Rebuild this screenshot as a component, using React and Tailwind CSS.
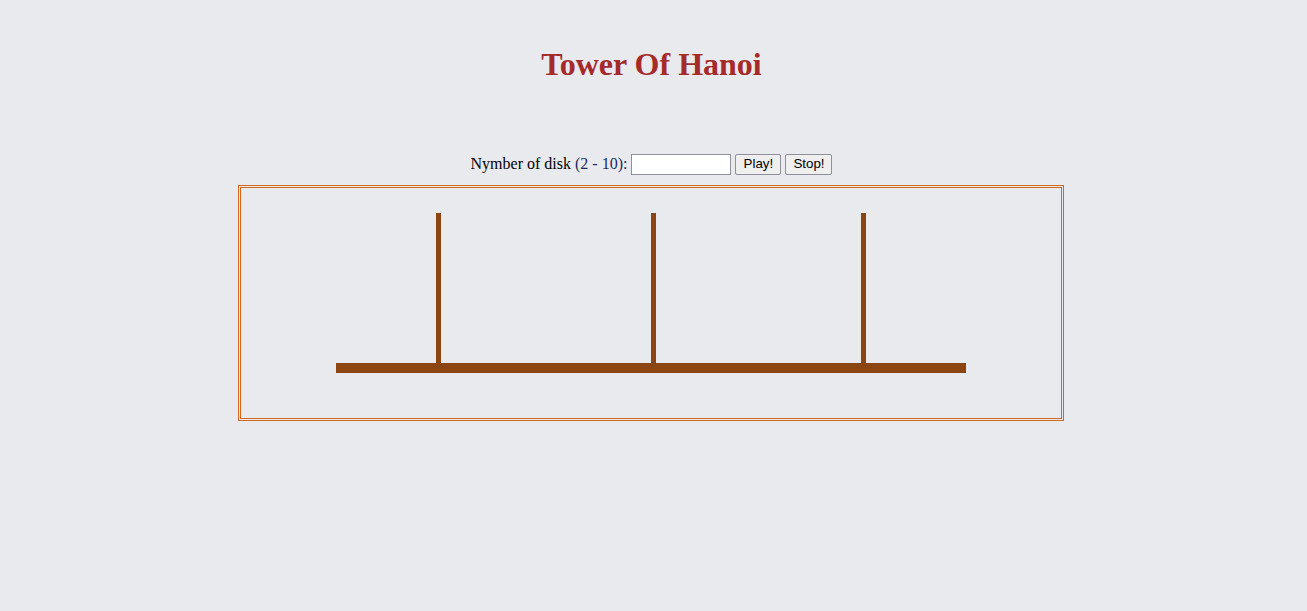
export default function App() {
  const poles = [195, 410, 620];

  return (
    <div className="min-h-[611px] w-full bg-[#e9eaee] font-['Liberation_Serif',serif] text-black">
      <h1 className="mr-[4px] pt-[46px] text-center text-[32px] font-bold leading-[37px] text-[#a52a2a]">
        Tower Of Hanoi
      </h1>

      <div className="mr-[4px] mt-[70px] flex h-[22px] items-center justify-center text-[16px]">
        <span>
          Nymber of disk <span className="text-[#1a2a5e]">(2 - 10):</span>
        </span>
        <input
          type="text"
          className="ml-[4px] h-[21px] w-[100px] border border-[#8f8f9d] bg-white px-1 text-[13px] outline-none"
        />
        <button className="ml-[4px] h-[21px] w-[46px] rounded-[2px] border border-[#8f8f9d] bg-[#efefef] font-['Liberation_Sans',sans-serif] text-[13.33px] leading-none">
          Play!
        </button>
        <button className="ml-[4px] h-[21px] w-[47px] rounded-[2px] border border-[#8f8f9d] bg-[#efefef] font-['Liberation_Sans',sans-serif] text-[13.33px] leading-none">
          Stop!
        </button>
      </div>

      <div className="mt-[10px] flex justify-center">
        <div className="ml-[-5px] border-[3px] border-double border-[#d2691e]">
          <svg width="820" height="230" viewBox="0 0 820 230" className="block">
            {poles.map((x) => (
              <rect key={x} x={x} y={25} width={5} height={150} fill="#8b4513" />
            ))}
            <rect x={95} y={175} width={630} height={10} fill="#8b4513" />
          </svg>
        </div>
      </div>
    </div>
  );
}
